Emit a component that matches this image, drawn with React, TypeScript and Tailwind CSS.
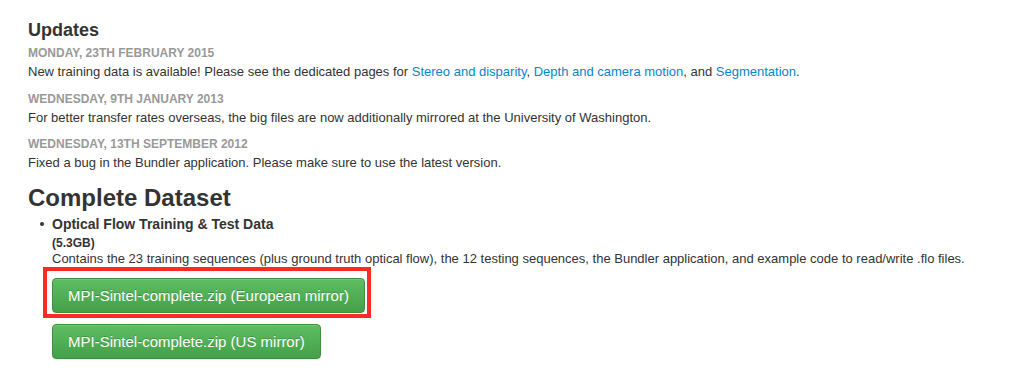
const font = { fontFamily: '"Liberation Sans", Arial, Helvetica, sans-serif' };

function Update({ date, children, first }: { date: string; children: React.ReactNode; first?: boolean }) {
  return (
    <div className={first ? "mt-[5px]" : "mt-[9.5px]"}>
      <div className="text-[12px] font-bold uppercase leading-[16px] text-[#999]">{date}</div>
      <p className="mt-[2px] text-[13px] leading-[18px] text-[#333]">{children}</p>
    </div>
  );
}

function GreenButton({ label }: { label: string }) {
  return (
    <a
      href="#"
      className="inline-flex h-[35px] items-center rounded-[4px] border border-[#3e8f3e] bg-gradient-to-b from-[#5dbe62] to-[#45a049] px-[15px] text-[15px] text-white shadow-[inset_0_1px_0_rgba(255,255,255,0.15),0_1px_1px_rgba(0,0,0,0.075)] [text-shadow:0_-1px_0_rgba(0,0,0,0.2)]"
    >
      {label}
    </a>
  );
}

export default function App() {
  const link = "text-[#0088cc]";
  return (
    <div className="min-h-[392px] bg-white px-[28px] pt-[20px] text-[#333]" style={font}>
      <h2 className="text-[18px] font-bold leading-[20px]">Updates</h2>

      <Update date="Monday, 23th February 2015" first>
        New training data is available! Please see the dedicated pages for{" "}
        <a href="#" className={link}>Stereo and disparity</a>,{" "}
        <a href="#" className={link}>Depth and camera motion</a>, and{" "}
        <a href="#" className={link}>Segmentation</a>.
      </Update>
      <Update date="Wednesday, 9th January 2013">
        For better transfer rates overseas, the big files are now additionally mirrored at the University of Washington.
      </Update>
      <Update date="Wednesday, 13th September 2012">
        Fixed a bug in the Bundler application. Please make sure to use the latest version.
      </Update>

      <h2 className="mt-[12.5px] text-[24px] font-bold leading-[26px]">Complete Dataset</h2>

      <ul className="mt-[4px]">
        <li className="flex text-[14px] leading-[18px]">
          <span className="flex h-[18px] w-[24px] shrink-0 items-center justify-center pl-[4px]">
            <span className="h-[4px] w-[4px] rounded-full bg-[#333]" />
          </span>
          <div>
            <div className="font-bold">Optical Flow Training &amp; Test Data</div>
            <div className="mt-[3.5px] text-[12px] font-bold leading-[14px]">(5.3GB)</div>
            <p className="text-[13px] leading-[18px]">
              Contains the 23 training sequences (plus ground truth optical flow), the 12 testing sequences, the Bundler
              application, and example code to read/write .flo files.
            </p>
            <div className="mt-[10px] flex flex-col items-start gap-[11px]">
              <div className="relative">
                <GreenButton label="MPI-Sintel-complete.zip (European mirror)" />
                <div className="pointer-events-none absolute -top-[11px] -left-[9px] -right-[6px] -bottom-[5px] border-[4px] border-[#fb2a26]" />
              </div>
              <GreenButton label="MPI-Sintel-complete.zip (US mirror)" />
            </div>
          </div>
        </li>
      </ul>
    </div>
  );
}
